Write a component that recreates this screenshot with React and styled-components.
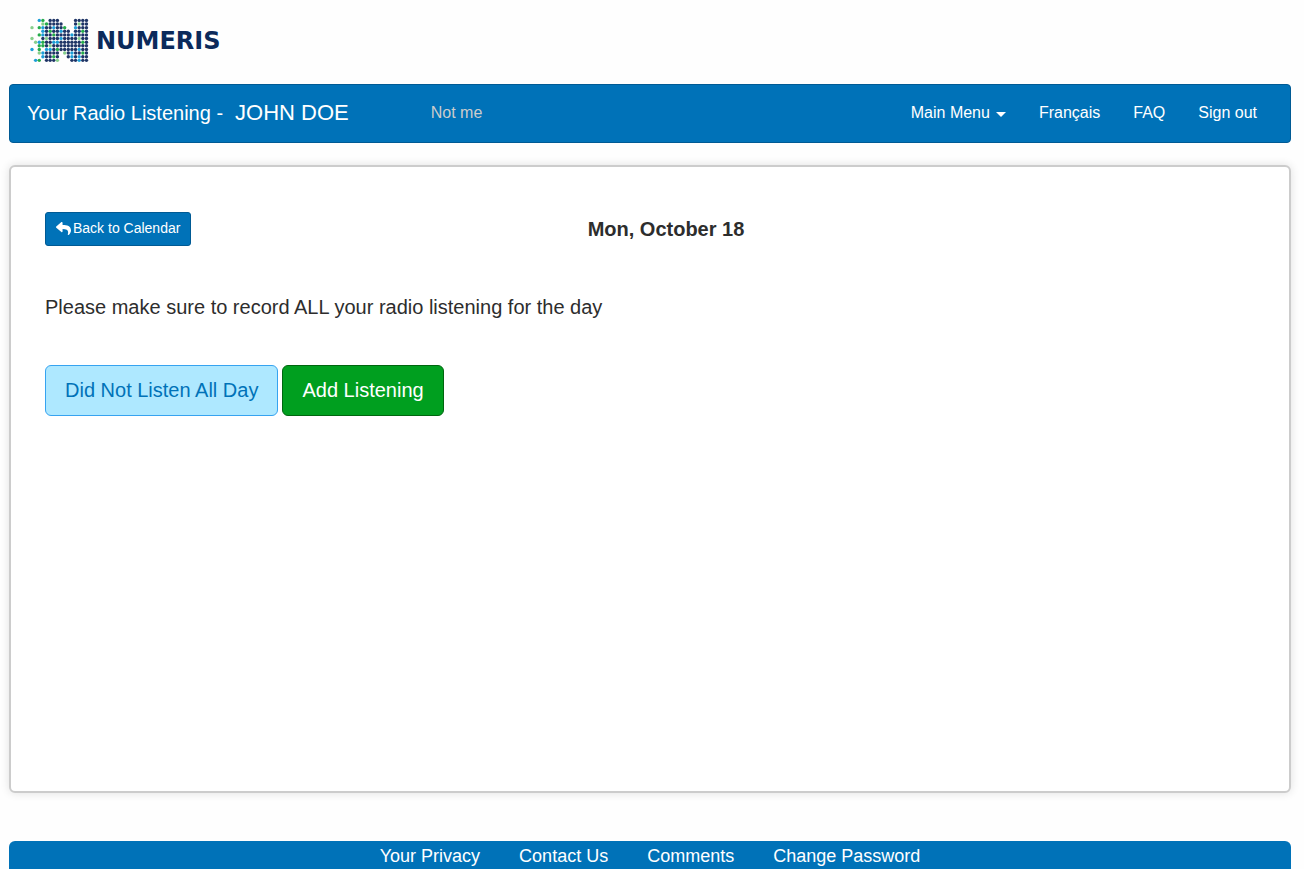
import React from 'react';
import styled, { createGlobalStyle } from 'styled-components';
import { FaReply } from 'react-icons/fa';

const GlobalStyle = createGlobalStyle`
    * {
        box-sizing: border-box;
    }
    body {
        margin: 0;
        background: #fefefe;
        color: #2d2d2d;
        font-family: "Liberation Sans", Arial, sans-serif;
    }
`;

const Page = styled.div`
    display: flex;
    flex-direction: column;
    min-height: 100vh;
    padding: 0 13px 0 9px;
`;

const Header = styled.header`
    height: 84px;
    padding: 18px 20px 0;
`;

const LogoLink = styled.a`
    display: inline-block;
`;

const LogoSvg = styled.svg`
    display: block;
`;

const Navbar = styled.nav`
    display: flex;
    align-items: center;
    min-height: 59px;
    padding: 0 33px 2px 17px;
    background: #0072b8;
    border: 1px solid #005a94;
    border-radius: 4px;
    color: #fff;
`;

const Brand = styled.span`
    font-size: 20px;
    line-height: 24px;
`;

const UserName = styled.span`
    margin-left: 12px;
    font-size: 22px;
    line-height: 24px;
`;

const NotMe = styled.a`
    margin-left: 82px;
    font-size: 16px;
    line-height: 24px;
    color: #ccc;
    text-decoration: none;
`;

const Menu = styled.div`
    display: flex;
    align-items: center;
    gap: 33px;
    margin-left: auto;
`;

const MenuLink = styled.a`
    font-size: 16px;
    line-height: 24px;
    color: #fff;
    text-decoration: none;
`;

const MenuButton = styled.button`
    display: flex;
    align-items: center;
    gap: 6px;
    padding: 0;
    border: 0;
    background: none;
    color: #fff;
    font-family: inherit;
    font-size: 16px;
    line-height: 24px;
    cursor: pointer;
`;

const Caret = styled.span`
    margin-top: 3px;
    border-top: 5px solid #fff;
    border-left: 5px solid transparent;
    border-right: 5px solid transparent;
`;

const Panel = styled.main`
    flex: 1;
    margin: 22px 0 48px;
    padding: 45px 34px;
    background: #fff;
    border: 2px solid #ccc;
    border-radius: 6px;
    box-shadow: 0 0 10px rgba(0, 0, 0, 0.12);
`;

const DayHeader = styled.div`
    display: grid;
    grid-template-columns: 1fr auto 1fr;
    align-items: center;
`;

const DayTitle = styled.h1`
    margin: 0;
    padding-left: 32px;
    font-size: 20px;
    line-height: 24px;
`;

const Message = styled.p`
    margin: 49px 0 46px;
    font-size: 20px;
    line-height: 24px;
`;

const Actions = styled.div`
    display: flex;
    gap: 4px;
`;

const Button = styled.button`
    height: 51px;
    padding: 0 19px 2px;
    border: 1px solid ${(props) => props.$border};
    border-radius: 6px;
    background: ${(props) => props.$bg};
    color: ${(props) => props.$color};
    font-family: inherit;
    font-size: 20px;
    line-height: 24px;
    cursor: pointer;
`;

const BackButton = styled(Button)`
    display: flex;
    align-items: center;
    justify-self: start;
    gap: 2px;
    height: 34px;
    padding: 0 10px 2px;
    border-radius: 3px;
    font-size: 14px;
`;

const Footer = styled.footer`
    display: flex;
    justify-content: center;
    gap: 39px;
    padding: 3px 0 1px;
    background: #0072b8;
    border-radius: 6px 6px 0 0;
`;

const FooterLink = styled.a`
    font-size: 18px;
    line-height: 24px;
    color: #fff;
    text-decoration: none;
`;

const dotColors = {
    n: '#1f3566',
    b: '#1d9fd8',
    g: '#25ac4b',
    l: '#86cf8c',
};

// one letter for each dot, a point is a gap
const dotRows = [
    '..bg.nnn....nnnn',
    '...lgnnnn...nlnn',
    'l.gbnnbnng..bnnn',
    '...bngnnbnn.nngn',
    '..gbnngnnnnbnnnn',
    'l..nlnnnbnnnnlnn',
    '.lbgnnbbnnnnnngn',
    '..ggnlnnnnnnnnnn',
    'b.g.bbngnnnnnbnn',
    '..lbnnnn.lnbnngn',
    '...bnngn..nbnbnn',
    '.bg.nnnl...nnbnn',
];

const footerLinks = ['Your Privacy', 'Contact Us', 'Comments', 'Change Password'];

const Logo = () => (
    <LogoSvg width="200" height="46" viewBox="0 0 200 46" role="img" aria-label="Numeris">
        {dotRows.map((row, y) =>
            row.split('').map((dot, x) =>
                dot === '.' ? null : (
                    <circle
                        key={`${x}-${y}`}
                        cx={3 + x * 3.63}
                        cy={2.4 + y * 3.63}
                        r="1.7"
                        fill={dotColors[dot]}
                    />
                )
            )
        )}
        <text
            x="67"
            y="31"
            fill="#0b2a5b"
            fontFamily="DejaVu Sans, sans-serif"
            fontWeight="700"
            fontSize="24"
        >
            NUMERIS
        </text>
    </LogoSvg>
);

const App = () => {
    return (
        <>
            <GlobalStyle />
            <Page>
                <Header>
                    <LogoLink href="#home"><Logo /></LogoLink>
                </Header>

                <Navbar>
                    <Brand>Your Radio Listening -</Brand>
                    <UserName>JOHN DOE</UserName>
                    <NotMe href="#not-me">Not me</NotMe>
                    <Menu>
                        <MenuButton type="button">Main Menu <Caret /></MenuButton>
                        <MenuLink href="#fr">Français</MenuLink>
                        <MenuLink href="#faq">FAQ</MenuLink>
                        <MenuLink href="#sign-out">Sign out</MenuLink>
                    </Menu>
                </Navbar>

                <Panel>
                    <DayHeader>
                        <BackButton type="button" $bg="#0072b8" $border="#005a94" $color="#fff">
                            <FaReply size={15} /> Back to Calendar
                        </BackButton>
                        <DayTitle>Mon, October 18</DayTitle>
                    </DayHeader>
                    <Message>Please make sure to record ALL your radio listening for the day</Message>
                    <Actions>
                        <Button type="button" $bg="#aee8ff" $border="#36a3f0" $color="#0072b8">
                            Did Not Listen All Day
                        </Button>
                        <Button type="button" $bg="#009f1f" $border="#00660f" $color="#fff">
                            Add Listening
                        </Button>
                    </Actions>
                </Panel>

                <Footer>
                    {footerLinks.map((text) => (
                        <FooterLink href="#footer" key={text}>{text}</FooterLink>
                    ))}
                </Footer>
            </Page>
        </>
    );
}

export default App;
